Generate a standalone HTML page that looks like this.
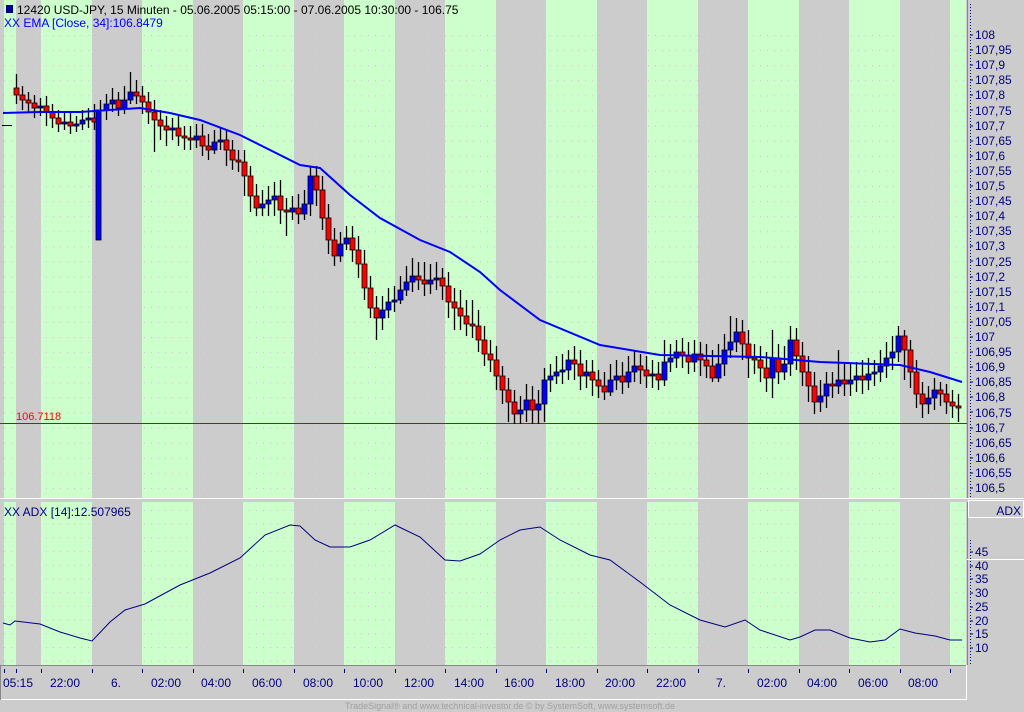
<!DOCTYPE html>
<html><head><meta charset="utf-8"><style>
body{margin:0;width:1024px;height:712px;background:#cccccc;overflow:hidden;}
svg{position:absolute;left:0;top:0;font-family:"Liberation Sans",sans-serif}
.ax{fill:#000080;font-size:12px}
.b{fill:#0000ff;stroke:#000;stroke-width:0.8}
.r{fill:#ff0000;stroke:#000;stroke-width:0.8}
</style></head><body>
<svg width="1024" height="712" xmlns="http://www.w3.org/2000/svg">
<defs>
<pattern id="d1" x="4" y="35" width="7" height="15.1" patternUnits="userSpaceOnUse"><rect x="0" y="0" width="1" height="1" fill="#d6b8d6"/></pattern>
<pattern id="d2" x="4" y="510" width="7" height="13.7" patternUnits="userSpaceOnUse"><rect x="0" y="0" width="1" height="1" fill="#d6b8d6"/></pattern>
</defs>
<g fill="#ccffcc">
<rect x="4" y="0" width="12" height="498"/><rect x="41" y="0" width="51" height="498"/><rect x="142" y="0" width="51" height="498"/><rect x="243" y="0" width="51" height="498"/><rect x="344" y="0" width="51" height="498"/><rect x="445" y="0" width="51" height="498"/><rect x="546" y="0" width="51" height="498"/><rect x="647" y="0" width="51" height="498"/><rect x="748" y="0" width="51" height="498"/><rect x="849" y="0" width="51" height="498"/><rect x="950" y="0" width="16" height="498"/>
<rect x="4" y="502" width="12" height="163"/><rect x="41" y="502" width="51" height="163"/><rect x="142" y="502" width="51" height="163"/><rect x="243" y="502" width="51" height="163"/><rect x="344" y="502" width="51" height="163"/><rect x="445" y="502" width="51" height="163"/><rect x="546" y="502" width="51" height="163"/><rect x="647" y="502" width="51" height="163"/><rect x="748" y="502" width="51" height="163"/><rect x="849" y="502" width="51" height="163"/><rect x="950" y="502" width="16" height="163"/>
</g>
<rect x="4" y="30" width="962" height="468" fill="url(#d1)"/>
<rect x="4" y="505" width="962" height="160" fill="url(#d2)"/>
<line x1="967.5" y1="0" x2="967.5" y2="498" stroke="#888"/>
<line x1="0" y1="498.5" x2="1024" y2="498.5" stroke="#fff"/>
<line x1="967.5" y1="502" x2="967.5" y2="665" stroke="#888"/>
<line x1="0" y1="665.5" x2="967" y2="665.5" stroke="#888"/>
<line x1="967" y1="559.5" x2="1024" y2="559.5" stroke="#fff"/>
<line x1="0" y1="699.5" x2="967" y2="699.5" stroke="#fff"/>
<line x1="966.5" y1="665" x2="966.5" y2="700" stroke="#fff"/>
<line x1="0.5" y1="665" x2="0.5" y2="700" stroke="#888"/>
<rect x="968.5" y="500.5" width="55" height="17" fill="#ccc" stroke="#fff"/>
<text x="1021" y="515" class="ax" text-anchor="end">ADX</text>
<line x1="970.5" y1="4" x2="970.5" y2="498" stroke="#000080" stroke-dasharray="1 2"/>
<line x1="970.5" y1="540" x2="970.5" y2="665" stroke="#000080" stroke-dasharray="1 2"/>
<g class="ax">
<text x="975" y="39">108</text><text x="975" y="54">107,95</text><text x="975" y="69">107,9</text><text x="975" y="84">107,85</text><text x="975" y="99">107,8</text><text x="975" y="115">107,75</text><text x="975" y="130">107,7</text><text x="975" y="145">107,65</text><text x="975" y="160">107,6</text><text x="975" y="175">107,55</text><text x="975" y="190">107,5</text><text x="975" y="205">107,45</text><text x="975" y="220">107,4</text><text x="975" y="235">107,35</text><text x="975" y="250">107,3</text><text x="975" y="266">107,25</text><text x="975" y="281">107,2</text><text x="975" y="296">107,15</text><text x="975" y="311">107,1</text><text x="975" y="326">107,05</text><text x="975" y="341">107</text><text x="975" y="356">106,95</text><text x="975" y="371">106,9</text><text x="975" y="386">106,85</text><text x="975" y="401">106,8</text><text x="975" y="417">106,75</text><text x="975" y="432">106,7</text><text x="975" y="447">106,65</text><text x="975" y="462">106,6</text><text x="975" y="477">106,55</text><text x="975" y="492">106,5</text>
<text x="975" y="556">45</text><text x="975" y="570">40</text><text x="975" y="583">35</text><text x="975" y="597">30</text><text x="975" y="611">25</text><text x="975" y="625">20</text><text x="975" y="638">15</text><text x="975" y="652">10</text>
</g>
<path stroke="#000080" d="M970 35h3M970 50h3M970 65h3M970 80h3M970 95h3M970 110h3M970 126h3M970 141h3M970 156h3M970 171h3M970 186h3M970 201h3M970 216h3M970 231h3M970 246h3M970 261h3M970 277h3M970 292h3M970 307h3M970 322h3M970 337h3M970 352h3M970 367h3M970 382h3M970 397h3M970 412h3M970 428h3M970 443h3M970 458h3M970 473h3M970 488h3M970 552h3M970 566h3M970 579h3M970 593h3M970 607h3M970 621h3M970 634h3M970 648h3"/>
<path stroke="#000080" d="M4.5 669v4M16.5 669v4M41.5 669v4M92.5 669v4M142.5 669v4M193.5 669v4M243.5 669v4M294.5 669v4M344.5 669v4M395.5 669v4M445.5 669v4M496.5 669v4M546.5 669v4M597.5 669v4M647.5 669v4M698.5 669v4M748.5 669v4M799.5 669v4M849.5 669v4M900.5 669v4M950.5 669v4"/>
<g class="ax" text-anchor="middle">
<text x="18" y="687">05:15</text><text x="65" y="687">22:00</text><text x="116" y="687">6.</text><text x="166" y="687">02:00</text><text x="216" y="687">04:00</text><text x="267" y="687">06:00</text><text x="318" y="687">08:00</text><text x="368" y="687">10:00</text><text x="419" y="687">12:00</text><text x="469" y="687">14:00</text><text x="519" y="687">16:00</text><text x="570" y="687">18:00</text><text x="620" y="687">20:00</text><text x="671" y="687">22:00</text><text x="721" y="687">7.</text><text x="772" y="687">02:00</text><text x="822" y="687">04:00</text><text x="873" y="687">06:00</text><text x="923" y="687">08:00</text>
</g>
<text x="510" y="709" fill="#a0a0a0" font-size="9" text-anchor="middle">TradeSignal® and www.technical-investor.de © by SystemSoft, www.systemsoft.de</text>
<rect x="6" y="5" width="7" height="8" fill="#000080"/>
<text x="17" y="14" fill="#000" font-size="12">12420  USD-JPY, 15 Minuten - 05.06.2005 05:15:00 - 07.06.2005 10:30:00 - 106.75</text>
<text x="4" y="27" fill="#0000ff" font-size="12">XX EMA [Close, 34]:106.8479</text>
<text x="4" y="516" fill="#000080" font-size="12">XX ADX [14]:12.507965</text>
<line x1="0" x2="967" y1="423.5" y2="423.5" stroke="#cc0000"/>
<text x="16" y="420" fill="#ff0000" font-size="11">106.7118</text>
<line x1="2" x2="12" y1="125.5" y2="125.5" stroke="#000"/>
<path stroke="#000" stroke-width="1.3" fill="none" d="M16.5 74V104M22.5 86V110M28.5 92V112M34.5 95V118M40.5 98V116M46.5 96V126M52.5 104V128M58.5 110V132M64.5 112V130M70.5 112V134M76.5 116V132M82.5 110V130M88.5 108V128M94.5 104V130M100.5 100V240M106.5 94V120M112.5 88V112M118.5 92V116M124.5 86V114M130.5 72V104M136.5 80V104M142.5 86V114M148.5 92V124M154.5 100V152M160.5 110V140M166.5 116V146M172.5 118V140M178.5 116V146M184.5 126V150M190.5 126V150M196.5 124V148M202.5 124V156M208.5 134V160M214.5 130V154M220.5 128V150M226.5 130V166M232.5 140V170M238.5 150V172M244.5 150V196M250.5 166V212M256.5 184V216M262.5 190V216M268.5 186V216M274.5 182V216M280.5 180V224M286.5 198V236M292.5 196V220M298.5 194V224M304.5 190V220M310.5 166V216M316.5 166V206M322.5 176V230M328.5 204V254M334.5 228V266M340.5 232V262M346.5 226V250M352.5 226V262M358.5 236V278M364.5 250V300M370.5 276V318M376.5 296V340M382.5 296V330M388.5 288V318M394.5 286V312M400.5 276V304M406.5 266V296M412.5 258V292M418.5 262V290M424.5 262V296M430.5 264V294M436.5 262V290M442.5 268V300M448.5 272V318M454.5 288V330M460.5 290V330M466.5 300V336M472.5 300V338M478.5 310V352M484.5 326V366M490.5 340V372M496.5 346V390M502.5 366V404M508.5 378V422M514.5 390V424M520.5 396V424M526.5 384V422M532.5 386V424M538.5 390V424M544.5 368V422M550.5 364V392M556.5 356V384M562.5 354V384M568.5 350V380M574.5 346V380M580.5 350V390M586.5 360V388M592.5 360V396M598.5 370V398M604.5 372V400M610.5 364V396M616.5 360V390M622.5 362V394M628.5 356V388M634.5 350V382M640.5 354V384M646.5 356V388M652.5 360V388M658.5 362V390M664.5 340V386M670.5 344V372M676.5 340V368M682.5 338V368M688.5 342V374M694.5 340V372M700.5 342V376M706.5 344V378M712.5 350V382M718.5 344V382M724.5 334V376M730.5 316V358M736.5 318V352M742.5 320V360M748.5 330V378M754.5 344V374M760.5 346V382M766.5 352V392M772.5 330V398M778.5 344V384M784.5 346V380M790.5 326V376M796.5 328V370M802.5 342V386M808.5 356V402M814.5 372V414M820.5 380V412M826.5 372V408M832.5 372V398M838.5 350V394M844.5 364V396M850.5 362V396M856.5 362V392M862.5 360V394M868.5 358V390M874.5 360V386M880.5 350V382M886.5 342V378M892.5 336V370M898.5 326V362M904.5 330V380M910.5 340V388M916.5 360V408M922.5 382V418M928.5 386V414M934.5 378V410M940.5 382V406M946.5 384V414M952.5 390V418M958.5 394V422"/>
<g>
<rect class="r" x="14" y="88" width="5" height="7"/><rect class="r" x="20" y="95" width="5" height="5"/><rect class="r" x="26" y="100" width="5" height="3"/><rect class="r" x="32" y="103" width="5" height="5"/><rect class="b" x="38" y="106" width="5" height="2"/><rect class="r" x="44" y="106" width="5" height="6"/><rect class="r" x="50" y="112" width="5" height="6"/><rect class="r" x="56" y="118" width="5" height="6"/><rect class="b" x="62" y="122" width="5" height="2"/><rect class="r" x="68" y="122" width="5" height="4"/><rect class="b" x="74" y="124" width="5" height="2"/><rect class="b" x="80" y="120" width="5" height="4"/><rect class="b" x="86" y="118" width="5" height="2"/><rect class="r" x="92" y="118" width="5" height="4"/><rect class="b" x="96" y="110" width="5" height="130"/><rect class="b" x="104" y="104" width="5" height="6"/><rect class="b" x="110" y="100" width="5" height="4"/><rect class="r" x="116" y="100" width="5" height="8"/><rect class="b" x="122" y="100" width="5" height="8"/><rect class="b" x="128" y="92" width="5" height="8"/><rect class="r" x="134" y="92" width="5" height="4"/><rect class="r" x="140" y="96" width="5" height="6"/><rect class="r" x="146" y="102" width="5" height="10"/><rect class="r" x="152" y="112" width="5" height="8"/><rect class="r" x="158" y="120" width="5" height="6"/><rect class="r" x="164" y="126" width="5" height="4"/><rect class="b" x="170" y="128" width="5" height="2"/><rect class="r" x="176" y="128" width="5" height="8"/><rect class="r" x="182" y="136" width="5" height="2"/><rect class="r" x="188" y="138" width="5" height="2"/><rect class="b" x="194" y="136" width="5" height="4"/><rect class="r" x="200" y="136" width="5" height="10"/><rect class="r" x="206" y="146" width="5" height="4"/><rect class="b" x="212" y="142" width="5" height="8"/><rect class="b" x="218" y="140" width="5" height="2"/><rect class="r" x="224" y="140" width="5" height="10"/><rect class="r" x="230" y="150" width="5" height="10"/><rect class="r" x="236" y="160" width="5" height="2"/><rect class="r" x="242" y="162" width="5" height="14"/><rect class="r" x="248" y="176" width="5" height="20"/><rect class="r" x="254" y="196" width="5" height="12"/><rect class="b" x="260" y="204" width="5" height="4"/><rect class="b" x="266" y="200" width="5" height="4"/><rect class="b" x="272" y="196" width="5" height="4"/><rect class="r" x="278" y="196" width="5" height="14"/><rect class="r" x="284" y="210" width="5" height="2"/><rect class="b" x="290" y="208" width="5" height="4"/><rect class="r" x="296" y="208" width="5" height="6"/><rect class="b" x="302" y="204" width="5" height="10"/><rect class="b" x="308" y="176" width="5" height="28"/><rect class="r" x="314" y="176" width="5" height="14"/><rect class="r" x="320" y="190" width="5" height="28"/><rect class="r" x="326" y="218" width="5" height="22"/><rect class="r" x="332" y="240" width="5" height="16"/><rect class="b" x="338" y="244" width="5" height="12"/><rect class="b" x="344" y="238" width="5" height="6"/><rect class="r" x="350" y="238" width="5" height="12"/><rect class="r" x="356" y="250" width="5" height="14"/><rect class="r" x="362" y="264" width="5" height="24"/><rect class="r" x="368" y="288" width="5" height="20"/><rect class="r" x="374" y="308" width="5" height="10"/><rect class="b" x="380" y="310" width="5" height="8"/><rect class="b" x="386" y="302" width="5" height="8"/><rect class="b" x="392" y="300" width="5" height="2"/><rect class="b" x="398" y="290" width="5" height="10"/><rect class="b" x="404" y="282" width="5" height="8"/><rect class="b" x="410" y="276" width="5" height="6"/><rect class="r" x="416" y="276" width="5" height="4"/><rect class="r" x="422" y="280" width="5" height="4"/><rect class="b" x="428" y="280" width="5" height="4"/><rect class="b" x="434" y="278" width="5" height="2"/><rect class="r" x="440" y="278" width="5" height="8"/><rect class="r" x="446" y="286" width="5" height="16"/><rect class="r" x="452" y="302" width="5" height="6"/><rect class="r" x="458" y="308" width="5" height="8"/><rect class="r" x="464" y="316" width="5" height="8"/><rect class="r" x="470" y="324" width="5" height="2"/><rect class="r" x="476" y="326" width="5" height="14"/><rect class="r" x="482" y="340" width="5" height="14"/><rect class="r" x="488" y="354" width="5" height="6"/><rect class="r" x="494" y="360" width="5" height="16"/><rect class="r" x="500" y="376" width="5" height="14"/><rect class="r" x="506" y="390" width="5" height="12"/><rect class="r" x="512" y="402" width="5" height="12"/><rect class="b" x="518" y="410" width="5" height="4"/><rect class="b" x="524" y="400" width="5" height="10"/><rect class="r" x="530" y="400" width="5" height="10"/><rect class="b" x="536" y="404" width="5" height="6"/><rect class="b" x="542" y="380" width="5" height="24"/><rect class="b" x="548" y="376" width="5" height="4"/><rect class="b" x="554" y="372" width="5" height="4"/><rect class="b" x="560" y="370" width="5" height="2"/><rect class="b" x="566" y="360" width="5" height="10"/><rect class="r" x="572" y="360" width="5" height="4"/><rect class="r" x="578" y="364" width="5" height="12"/><rect class="b" x="584" y="372" width="5" height="4"/><rect class="r" x="590" y="372" width="5" height="8"/><rect class="r" x="596" y="380" width="5" height="6"/><rect class="r" x="602" y="386" width="5" height="6"/><rect class="b" x="608" y="380" width="5" height="12"/><rect class="b" x="614" y="376" width="5" height="4"/><rect class="r" x="620" y="376" width="5" height="6"/><rect class="b" x="626" y="372" width="5" height="10"/><rect class="b" x="632" y="366" width="5" height="6"/><rect class="r" x="638" y="366" width="5" height="4"/><rect class="r" x="644" y="370" width="5" height="6"/><rect class="b" x="650" y="374" width="5" height="2"/><rect class="r" x="656" y="374" width="5" height="6"/><rect class="b" x="662" y="362" width="5" height="18"/><rect class="b" x="668" y="358" width="5" height="4"/><rect class="b" x="674" y="352" width="5" height="6"/><rect class="r" x="680" y="352" width="5" height="4"/><rect class="r" x="686" y="356" width="5" height="6"/><rect class="b" x="692" y="354" width="5" height="8"/><rect class="r" x="698" y="354" width="5" height="6"/><rect class="r" x="704" y="360" width="5" height="6"/><rect class="r" x="710" y="366" width="5" height="12"/><rect class="b" x="716" y="364" width="5" height="14"/><rect class="b" x="722" y="350" width="5" height="14"/><rect class="b" x="728" y="342" width="5" height="8"/><rect class="b" x="734" y="332" width="5" height="10"/><rect class="r" x="740" y="332" width="5" height="12"/><rect class="r" x="746" y="344" width="5" height="14"/><rect class="r" x="752" y="358" width="5" height="2"/><rect class="r" x="758" y="360" width="5" height="8"/><rect class="r" x="764" y="368" width="5" height="10"/><rect class="b" x="770" y="358" width="5" height="20"/><rect class="r" x="776" y="358" width="5" height="14"/><rect class="b" x="782" y="364" width="5" height="8"/><rect class="b" x="788" y="340" width="5" height="24"/><rect class="r" x="794" y="340" width="5" height="16"/><rect class="r" x="800" y="356" width="5" height="16"/><rect class="r" x="806" y="372" width="5" height="14"/><rect class="r" x="812" y="386" width="5" height="16"/><rect class="b" x="818" y="396" width="5" height="6"/><rect class="b" x="824" y="384" width="5" height="12"/><rect class="r" x="830" y="384" width="5" height="2"/><rect class="b" x="836" y="380" width="5" height="6"/><rect class="r" x="842" y="380" width="5" height="4"/><rect class="b" x="848" y="380" width="5" height="4"/><rect class="b" x="854" y="376" width="5" height="4"/><rect class="r" x="860" y="376" width="5" height="4"/><rect class="b" x="866" y="374" width="5" height="6"/><rect class="b" x="872" y="372" width="5" height="2"/><rect class="b" x="878" y="366" width="5" height="6"/><rect class="b" x="884" y="358" width="5" height="8"/><rect class="b" x="890" y="352" width="5" height="6"/><rect class="b" x="896" y="336" width="5" height="16"/><rect class="r" x="902" y="336" width="5" height="14"/><rect class="r" x="908" y="350" width="5" height="22"/><rect class="r" x="914" y="372" width="5" height="22"/><rect class="r" x="920" y="394" width="5" height="10"/><rect class="b" x="926" y="398" width="5" height="6"/><rect class="b" x="932" y="390" width="5" height="8"/><rect class="r" x="938" y="390" width="5" height="4"/><rect class="r" x="944" y="394" width="5" height="8"/><rect class="r" x="950" y="402" width="5" height="4"/><rect class="r" x="956" y="406" width="5" height="2"/>
</g>
<polyline fill="none" stroke="#0000ff" stroke-width="2" points="3,113 40,112 80,112 140,108 170,113 200,120 240,135 270,150 300,165 320,168 350,195 380,218 420,240 450,252 480,272 500,290 540,320 600,345 660,355 760,357 820,362 900,365 930,372 962,382"/>
<polyline fill="none" stroke="#000080" stroke-width="1" points="3,623 10,625 15,621 40,624 60,632 80,638 92,641 110,622 125,610 145,604 180,585 210,573 240,558 265,535 290,525 300,526 315,540 330,547 350,547 370,540 395,525 420,537 445,560 460,561 480,554 500,540 520,530 540,527 560,540 590,555 610,560 640,582 670,605 700,620 725,627 745,620 760,630 790,640 800,637 815,630 830,630 850,638 870,642 885,640 900,629 915,633 935,636 950,640 962,640"/>
</svg>
</body></html>
